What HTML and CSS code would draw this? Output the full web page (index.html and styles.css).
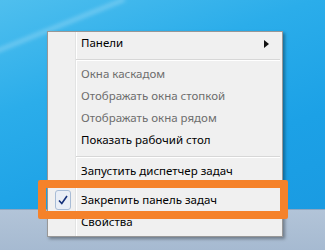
FILE: index.html
```html
<!DOCTYPE html>
<html lang="ru">
<head>
  <meta charset="UTF-8">
  <title>Меню панели задач</title>
  <link rel="stylesheet" href="styles.css">
</head>
<body>

  <div class="screen">
    <div class="wallpaper">
      <div class="streak"></div>
    </div>
    <div class="taskbar"></div>

    <!-- контекстное меню панели задач -->
    <div class="menu">
      <div class="menu-item">
        <span>Панели</span>
        <svg class="submenu-arrow" width="5" height="8" viewBox="0 0 5 8">
          <polygon points="0,0 5,4 0,8" fill="#111"/>
        </svg>
      </div>
      <div class="separator"></div>
      <div class="menu-item disabled">Окна каскадом</div>
      <div class="menu-item disabled">Отображать окна стопкой</div>
      <div class="menu-item disabled">Отображать окна рядом</div>
      <div class="menu-item">Показать рабочий стол</div>
      <div class="separator"></div>
      <div class="menu-item">Запустить диспетчер задач</div>
      <div class="menu-item checked">
        <span class="check-box">
          <svg width="10" height="10" viewBox="0 0 10 10">
            <path d="M1 5.5 L3.8 8.5 L9 1" fill="none" stroke="#14307a" stroke-width="1.6"/>
          </svg>
        </span>
        Закрепить панель задач
      </div>
      <div class="menu-item">Свойства</div>
    </div>

    <div class="highlight"></div>
  </div>

</body>
</html>
```

FILE: styles.css
```css
body {
  margin: 0;
  font-family: "Noto Sans", "Open Sans", sans-serif;
}

.screen {
  position: relative;
  width: 325px;
  height: 250px;
  display: flex;
  flex-direction: column;
  overflow: hidden;
}

.wallpaper {
  flex: 1;
  position: relative;
  background: linear-gradient(160deg, #4fbfee 0%, #2badea 35%, #1ca1e6 70%, #1a9be2 100%);
}

.streak {
  position: absolute;
  left: -20px;
  top: 26px;
  width: 150px;
  height: 3px;
  background: rgba(255,255,255,0.35);
  transform: rotate(-22deg);
  filter: blur(2px);
}

.taskbar {
  height: 40px;
  background: linear-gradient(#b2c4d8, #a6bad1);
  border-top: 1px solid #8ea6c2;
}

.menu {
  position: absolute;
  left: 47px;
  top: 31px;
  width: 234px;
  padding: 0 0 3px 0;
  background-color: #f0f0f0;
  background-image: linear-gradient(90deg, transparent 27px, #e2e3e3 27px, #e2e3e3 28px, #ffffff 28px, #ffffff 29px, transparent 29px);
  border: 1px solid #979797;
  box-shadow: 2px 2px 3px rgba(0,0,0,0.35);
  font-size: 11.5px;
  color: #000;
}

.menu-item {
  position: relative;
  height: 22px;
  line-height: 22px;
  padding-left: 33px;
}

.menu-item.disabled {
  color: #6d6d6d;
}

.submenu-arrow {
  position: absolute;
  right: 13px;
  top: 8px;
}

.separator {
  margin: 5px 2px 2px 28px;
  border-top: 1px solid #d7d7d7;
  border-bottom: 1px solid #ffffff;
}

.checked {
  margin-top: 7px;
}

.check-box {
  position: absolute;
  left: 7px;
  top: 1px;
  width: 14px;
  height: 18px;
  border: 1px solid #a8bcd6;
  border-radius: 3px;
  background: #e9eef6;
  display: flex;
  align-items: center;
  justify-content: center;
}

.highlight {
  position: absolute;
  left: 38px;
  top: 180px;
  width: 234px;
  height: 23px;
  border: 8px solid #f5822a;
  border-radius: 2px;
}
```
